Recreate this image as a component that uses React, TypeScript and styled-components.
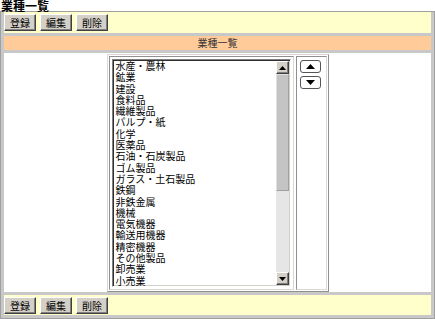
import React from "react";
import styled, { createGlobalStyle } from "styled-components";

const GlobalStyle = createGlobalStyle`
  html, body {
    margin: 0;
    padding: 0;
    background: #ffffff;
  }
  body {
    font-family: "Noto Sans CJK JP", "Noto Sans", sans-serif;
    color: #000;
  }
`;

const Page = styled.div`
  width: 435px;
  height: 319px;
  overflow: hidden;
`;

const Title = styled.div`
  height: 11px;
  line-height: 12px;
  font-size: 12px;
  font-weight: bold;
  padding-left: 1px;
  white-space: nowrap;
`;

const Frame = styled.div`
  box-sizing: border-box;
  width: 435px;
  height: 308px;
  display: flex;
  flex-direction: column;
  gap: 3px;
  padding: 0 3px 3px;
  border: 1px solid #a0a0a0;
  background: #c8c8c8;
`;

const Toolbar = styled.div`
  box-sizing: border-box;
  height: ${(p: { $h: number }) => p.$h}px;
  flex: none;
  display: flex;
  align-items: flex-start;
  gap: 4px;
  padding: 2px 0 0 0;
  background: #ffffcc;
`;

const ToolButton = styled.button`
  box-sizing: border-box;
  width: 32px;
  height: 17px;
  padding: 0;
  font-family: inherit;
  font-size: 10px;
  line-height: 14px;
  color: #000;
  background: #d4d0c8;
  border: 1px solid;
  border-color: #ffffff #404040 #404040 #ffffff;
  box-shadow: inset -1px -1px 0 #808080;
`;

const Header = styled.div`
  flex: none;
  height: 14px;
  line-height: 14px;
  font-size: 10px;
  text-align: center;
  color: #333;
  background: #ffcc99;
`;

const Content = styled.div`
  flex: 1;
  min-height: 0;
  display: flex;
  justify-content: center;
  padding: 1px 0 0;
  background: #ffffff;
`;

const InnerTable = styled.div`
  display: flex;
  gap: 2px;
  padding: 1px;
  border: 1px solid;
  border-color: #d8d8d8 #909090 #909090 #d8d8d8;
`;

const Cell = styled.div`
  box-sizing: border-box;
  display: flex;
  border: 1px solid;
  border-color: #909090 #d8d8d8 #d8d8d8 #909090;
`;

const ListCell = styled(Cell)`
  padding: 2px;
`;

const ArrowCell = styled(Cell)`
  width: 31px;
  flex-direction: column;
  gap: 3px;
  padding: 3px 3px;
`;

const ListBox = styled.div`
  box-sizing: border-box;
  width: 179px;
  display: flex;
  border: 1px solid;
  border-color: #808080 #ffffff #ffffff #808080;
  box-shadow: inset 1px 1px 0 #303030, inset -1px -1px 0 #d4d0c8;
  padding: 0 1px;
  background: #fff;
`;

const Items = styled.div`
  flex: 1;
  overflow: hidden;
  padding: 0 2px;
`;

const Item = styled.div`
  font-size: 10px;
  line-height: 11.3px;
  height: 11.3px;
  white-space: nowrap;
`;

const ScrollBar = styled.div`
  width: 13px;
  display: flex;
  flex-direction: column;
  margin: 1px 0;
  background: #e6e6e6;
`;

const ScrollArrow = styled.div`
  box-sizing: border-box;
  height: 13px;
  flex: none;
  display: flex;
  align-items: center;
  justify-content: center;
  background: #d4d0c8;
  border: 1px solid;
  border-color: #ffffff #404040 #404040 #ffffff;
  box-shadow: inset -1px -1px 0 #808080;
`;

const Thumb = styled.div`
  box-sizing: border-box;
  height: ${(p: { $h: number }) => p.$h}px;
  flex: none;
  background: #c4c4c4;
  border: 1px solid;
  border-color: #e0e0e0 #a0a0a0 #a0a0a0 #e0e0e0;
`;

const Track = styled.div`
  flex: 1;
`;

const MoveButton = styled.button`
  box-sizing: border-box;
  width: 21px;
  height: 13px;
  padding: 0;
  display: flex;
  align-items: center;
  justify-content: center;
  background: #ffffff;
  border: 1px solid #555;
  border-radius: 3px;
`;

const Triangle = ({ up, w, h }: { up: boolean; w: number; h: number }) => (
  <svg width={w} height={h} viewBox={`0 0 ${w} ${h}`}>
    <polygon
      points={up ? `0,${h} ${w},${h} ${w / 2},0` : `0,0 ${w},0 ${w / 2},${h}`}
      fill="#000"
    />
  </svg>
);

const industries = [
  "水産・農林",
  "鉱業",
  "建設",
  "食料品",
  "繊維製品",
  "パルプ・紙",
  "化学",
  "医薬品",
  "石油・石炭製品",
  "ゴム製品",
  "ガラス・土石製品",
  "鉄鋼",
  "非鉄金属",
  "機械",
  "電気機器",
  "輸送用機器",
  "精密機器",
  "その他製品",
  "卸売業",
  "小売業",
  "銀行業",
  "証券業",
];

const Buttons = () => (
  <>
    <ToolButton>登録</ToolButton>
    <ToolButton>編集</ToolButton>
    <ToolButton>削除</ToolButton>
  </>
);

export default function App() {
  return (
    <Page>
      <GlobalStyle />
      <Title>業種一覧</Title>
      <Frame>
        <Toolbar $h={21}>
          <Buttons />
        </Toolbar>
        <Header>業種一覧</Header>
        <Content>
          <InnerTable>
            <ListCell>
              <ListBox>
                <Items>
                  {industries.map((name) => (
                    <Item key={name}>{name}</Item>
                  ))}
                </Items>
                <ScrollBar>
                  <ScrollArrow>
                    <Triangle up w={7} h={4} />
                  </ScrollArrow>
                  <Thumb $h={117} />
                  <Track />
                  <ScrollArrow>
                    <Triangle up={false} w={7} h={4} />
                  </ScrollArrow>
                </ScrollBar>
              </ListBox>
            </ListCell>
            <ArrowCell>
              <MoveButton aria-label="上へ">
                <Triangle up w={9} h={5} />
              </MoveButton>
              <MoveButton aria-label="下へ">
                <Triangle up={false} w={9} h={5} />
              </MoveButton>
            </ArrowCell>
          </InnerTable>
        </Content>
        <Toolbar $h={20}>
          <Buttons />
        </Toolbar>
      </Frame>
    </Page>
  );
}
